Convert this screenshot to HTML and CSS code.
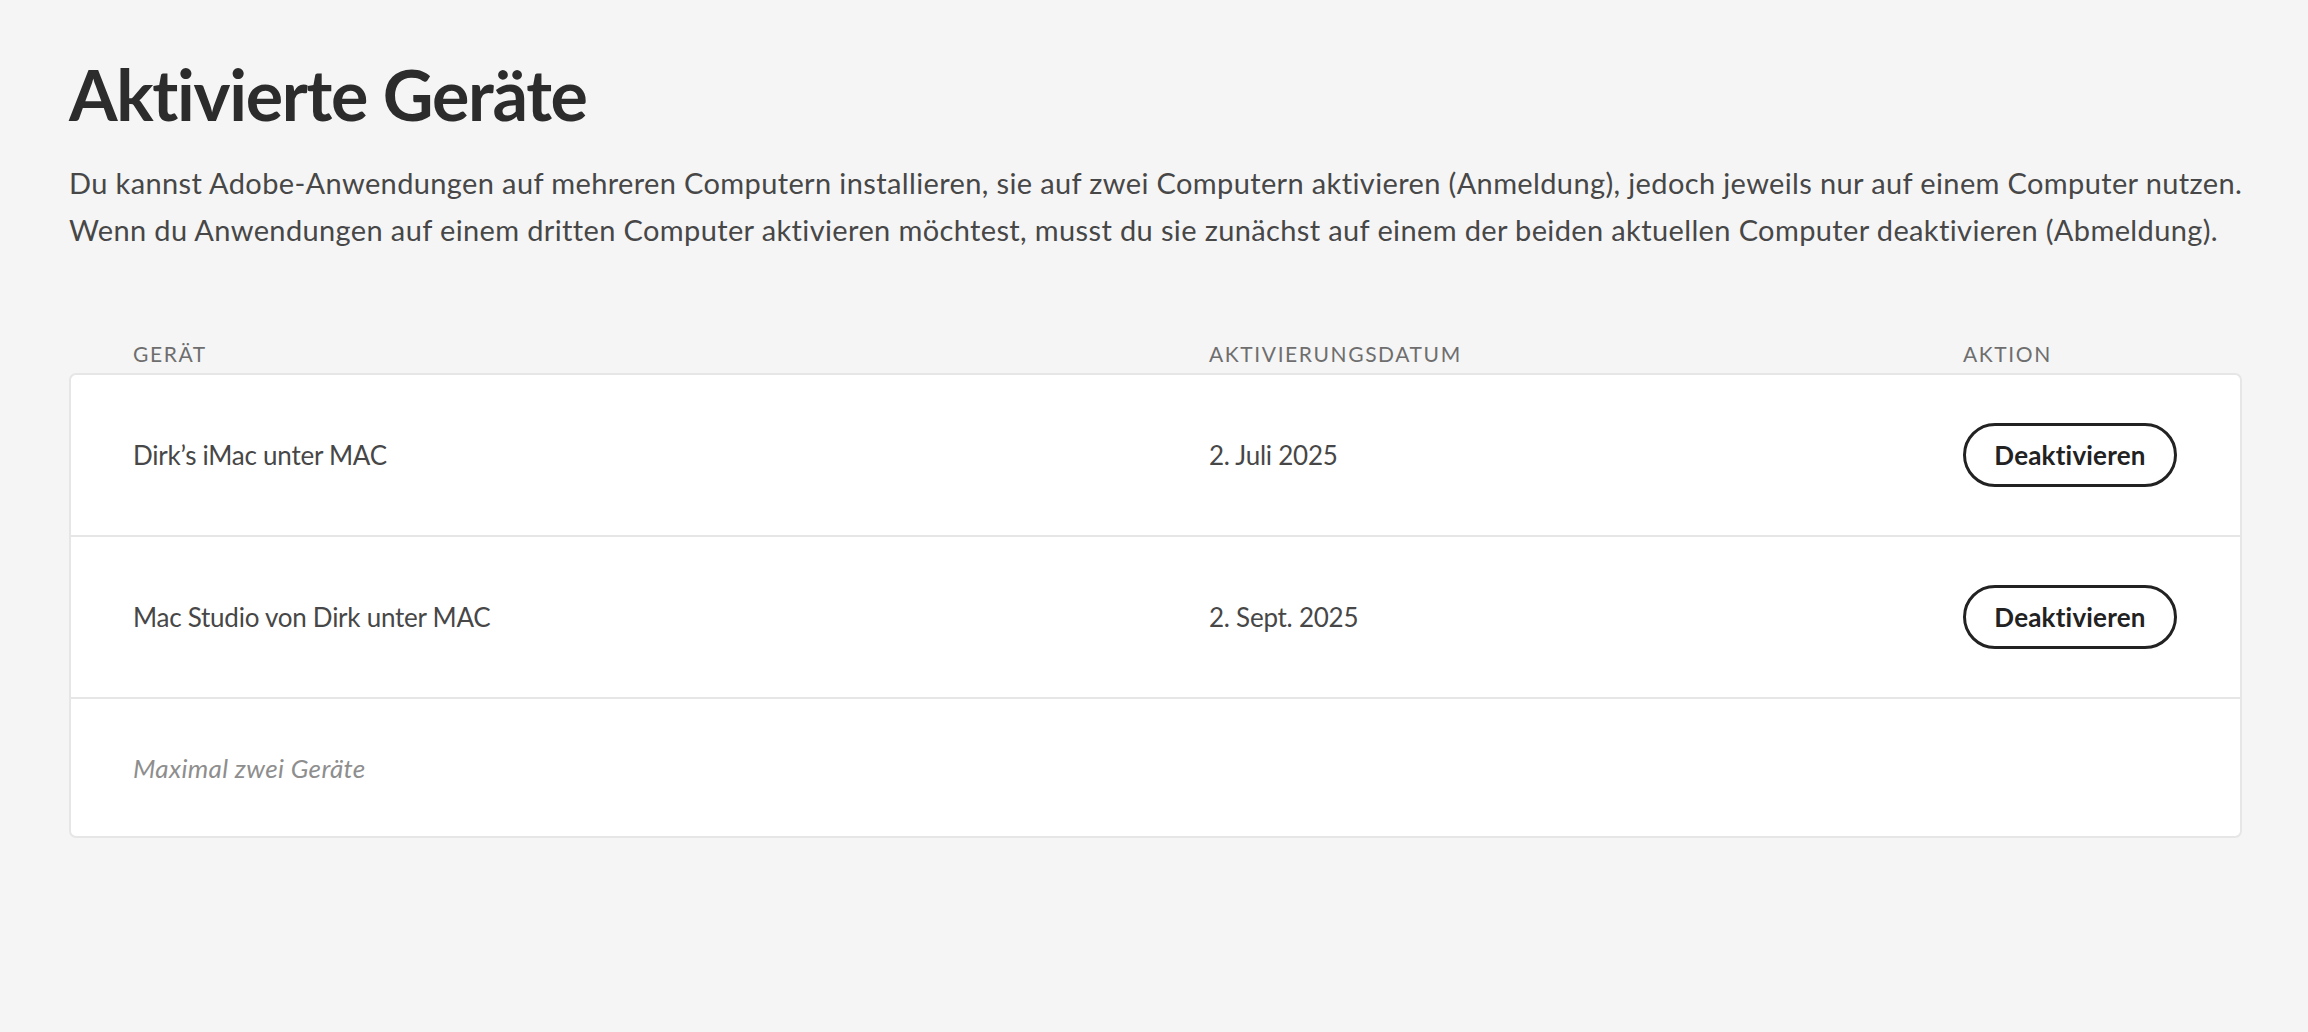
FILE: index.html
```html
<!DOCTYPE html>
<html lang="de">
<head>
<meta charset="utf-8">
<title>Aktivierte Geräte</title>
<link rel="stylesheet" href="styles.css">
</head>
<body>
<main class="page">
  <h1 class="title">Aktivierte Geräte</h1>
  <p class="intro">Du kannst Adobe-Anwendungen auf mehreren Computern installieren, sie auf zwei Computern aktivieren (Anmeldung), jedoch jeweils nur auf einem Computer nutzen.<br>Wenn du Anwendungen auf einem dritten Computer aktivieren möchtest, musst du sie zunächst auf einem der beiden aktuellen Computer deaktivieren (Abmeldung).</p>

  <section class="devices">
    <div class="head-row">
      <span class="head">Gerät</span>
      <span class="head">Aktivierungsdatum</span>
      <span class="head">Aktion</span>
    </div>
    <div class="card">
      <div class="row">
        <span class="cell">Dirk’s iMac unter MAC</span>
        <span class="cell">2. Juli 2025</span>
        <span class="cell"><button class="btn" type="button">Deaktivieren</button></span>
      </div>
      <div class="row">
        <span class="cell">Mac Studio von Dirk unter MAC</span>
        <span class="cell">2. Sept. 2025</span>
        <span class="cell"><button class="btn" type="button">Deaktivieren</button></span>
      </div>
      <div class="row row-note">
        <span class="note">Maximal zwei Geräte</span>
      </div>
    </div>
  </section>
</main>
</body>
</html>
```

FILE: styles.css
```css
html, body {
  margin: 0;
  padding: 0;
}

body {
  background: #f5f5f5;
  font-family: Lato, "Open Sans", "Liberation Sans", sans-serif;
  font-variant-ligatures: none;
  color: #4b4b4b;
}

.page {
  padding: 49px 66px 0 69px;
}

.title {
  margin: 0;
  font-size: 70px;
  line-height: 90px;
  font-weight: 700;
  letter-spacing: -1.3px;
  color: #2c2c2c;
}

.intro {
  margin: 20px 0 0;
  font-size: 29px;
  line-height: 47px;
  letter-spacing: 0.37px;
  color: #474747;
  white-space: nowrap;
}

.devices {
  margin-top: 86px;
}

.head-row,
.row {
  display: grid;
  grid-template-columns: 1076px 754px 1fr;
  align-items: center;
}

.head-row {
  padding: 0 0 4px 64px;
}

.head {
  font-size: 21px;
  line-height: 30px;
  letter-spacing: 1.6px;
  text-transform: uppercase;
  color: #6e6e6e;
}

.card {
  background: #fff;
  border: 2px solid #e6e6e6;
  border-radius: 7px;
}

.row {
  height: 160px;
  padding: 0 62px;
  border-bottom: 2px solid #e6e6e6;
  font-size: 26px;
  letter-spacing: -0.25px;
  color: #474747;
}

.row-note {
  height: 137px;
  border-bottom: 0;
}

.note {
  font-size: 26px;
  letter-spacing: 0.35px;
  font-style: italic;
  color: #8e8e8e;
}

.btn {
  width: 214px;
  height: 64px;
  padding: 0;
  border: 3px solid #222;
  border-radius: 32px;
  background: #fff;
  color: #222;
  font-family: inherit;
  font-size: 26px;
  font-weight: 700;
  letter-spacing: 0.2px;
  cursor: pointer;
}
```
